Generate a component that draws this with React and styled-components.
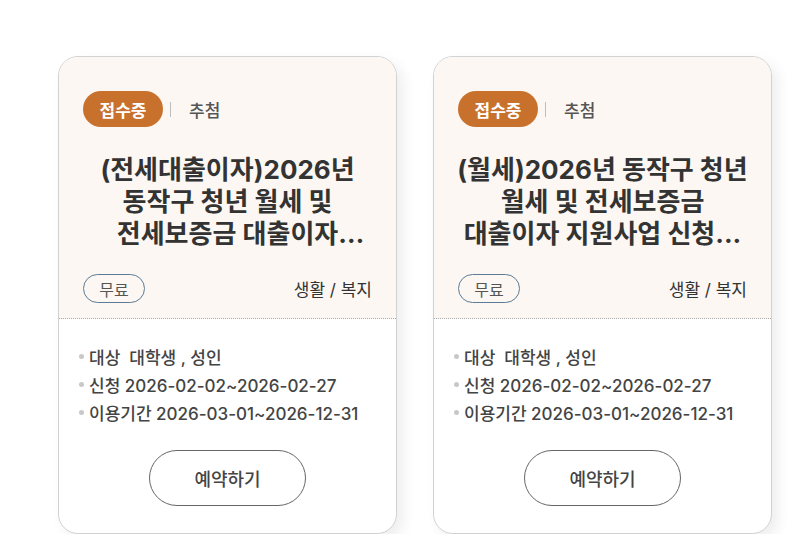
import React from "react";
import styled, { createGlobalStyle } from "styled-components";

const GlobalStyle = createGlobalStyle`
  html, body { margin: 0; padding: 0; background: #ffffff; }
  body { font-family: Inter, "Noto Sans CJK KR", "Noto Sans", sans-serif; color: #333; }
  * { box-sizing: border-box; }
`;

const Page = styled.div`
  display: flex;
  gap: 36px;
  padding: 56px 0 0 58px;
`;

const Card = styled.article`
  width: 339px;
  height: 478px;
  border: 1px solid #d2d2d2;
  border-radius: 20px;
  background: #fff;
  overflow: hidden;
  box-shadow: 6px 6px 14px rgba(0, 0, 0, 0.07);
  display: flex;
  flex-direction: column;
`;

const Top = styled.div`
  background: #fcf7f2;
  padding: 34px 24px 15px;
  border-bottom: 1px dotted #aaa;
`;

const StatusRow = styled.div`
  display: flex;
  align-items: center;
  height: 36px;
`;

const Badge = styled.span`
  display: inline-flex;
  align-items: center;
  justify-content: center;
  width: 80px;
  height: 36px;
  border-radius: 18px;
  background: #c8712d;
  color: #fff;
  font-size: 17px;
  font-weight: 700;
`;

const Sep = styled.span`
  width: 1px;
  height: 15px;
  background: #bdbdbd;
  margin: 0 18px 0 7px;
`;

const Method = styled.span`
  font-size: 17px;
  font-weight: 500;
  color: #555;
`;

const Title = styled.h2`
  margin: 27px -8px 0;
  height: 96px;
  font-size: 26px;
  line-height: 32px;
  font-weight: 700;
  color: #333;
  text-align: center;
  word-break: keep-all;
  display: -webkit-box;
  -webkit-line-clamp: 3;
  -webkit-box-orient: vertical;
  overflow: hidden;
`;

const MetaRow = styled.div`
  margin-top: 24px;
  display: flex;
  align-items: center;
  justify-content: space-between;
`;

const Chip = styled.span`
  display: inline-flex;
  align-items: center;
  justify-content: center;
  width: 62px;
  height: 29px;
  border: 1px solid #5b7b96;
  border-radius: 15px;
  font-size: 16px;
  color: #555;
`;

const Category = styled.span`
  font-size: 17px;
  color: #333;
`;

const Bottom = styled.div`
  flex: 1;
  padding: 23px 20px 0;
  display: flex;
  flex-direction: column;
  align-items: stretch;
`;

const InfoList = styled.ul`
  list-style: none;
  margin: 0;
  padding: 0;
`;

const InfoItem = styled.li`
  display: flex;
  align-items: center;
  height: 28px;
  font-size: 17px;
  font-weight: 500;
  color: #444;
  white-space: pre;
  &::before {
    content: "";
    width: 5px;
    height: 5px;
    border-radius: 50%;
    background: #c8c8c8;
    margin-right: 5px;
    flex: none;
  }
`;

const Button = styled.button`
  align-self: center;
  margin-top: 24px;
  width: 157px;
  height: 56px;
  border: 1px solid #666;
  border-radius: 28px;
  background: #fff;
  font-family: inherit;
  font-size: 18px;
  font-weight: 500;
  color: #444;
  cursor: pointer;
`;

const cards = [
  {
    title: "(전세대출이자)2026년 동작구 청년 월세 및 전세보증금 대출이자 지원사업 신청 안내",
  },
  {
    title: "(월세)2026년 동작구 청년 월세 및 전세보증금 대출이자 지원사업 신청...",
  },
];

export default function App() {
  return (
    <>
      <GlobalStyle />
      <Page>
        {cards.map((c, i) => (
          <Card key={i}>
            <Top>
              <StatusRow>
                <Badge>접수중</Badge>
                <Sep />
                <Method>추첨</Method>
              </StatusRow>
              <Title>{c.title}</Title>
              <MetaRow>
                <Chip>무료</Chip>
                <Category>생활 / 복지</Category>
              </MetaRow>
            </Top>
            <Bottom>
              <InfoList>
                <InfoItem>대상  대학생 , 성인</InfoItem>
                <InfoItem>신청 2026-02-02~2026-02-27</InfoItem>
                <InfoItem>이용기간 2026-03-01~2026-12-31</InfoItem>
              </InfoList>
              <Button>예약하기</Button>
            </Bottom>
          </Card>
        ))}
      </Page>
    </>
  );
}
